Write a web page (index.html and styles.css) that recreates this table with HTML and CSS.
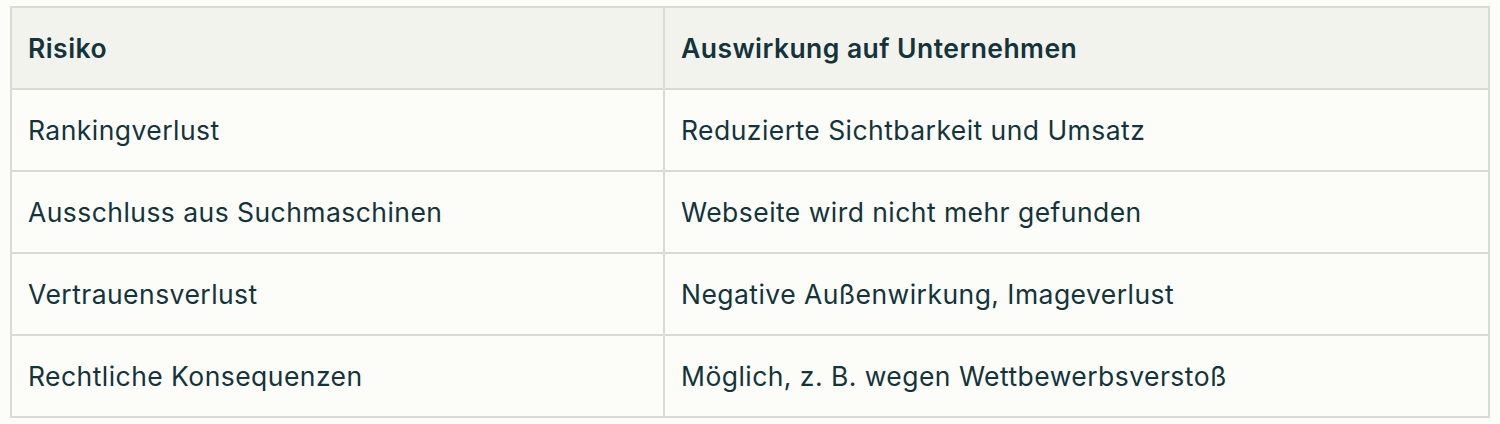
FILE: index.html
```html
<!DOCTYPE html>
<html>
    <head>
        <meta charset="utf-8" />
        <title>Risiken</title>
        <link rel="stylesheet" href="styles.css">
    </head>
    <body>
        <div class="wrap">
            <table class="risks">
                <thead>
                    <tr>
                        <th>Risiko</th>
                        <th>Auswirkung auf Unternehmen</th>
                    </tr>
                </thead>
                <tbody>
                    <tr>
                        <td>Rankingverlust</td>
                        <td>Reduzierte Sichtbarkeit und Umsatz</td>
                    </tr>
                    <tr>
                        <td>Ausschluss aus Suchmaschinen</td>
                        <td>Webseite wird nicht mehr gefunden</td>
                    </tr>
                    <tr>
                        <td>Vertrauensverlust</td>
                        <td>Negative Außenwirkung, Imageverlust</td>
                    </tr>
                    <tr>
                        <td>Rechtliche Konsequenzen</td>
                        <td>Möglich, z. B. wegen Wettbewerbsverstoß</td>
                    </tr>
                </tbody>
            </table>
        </div>
    </body>
</html>
```

FILE: styles.css
```css
body {
    margin: 0;
    background: #fcfcf9;
    font-family: Inter, "Liberation Sans", Arial, sans-serif;
    color: #13343b;
}

.wrap {
    padding: 6px 10px;
}

.risks {
    width: 1480px;
    box-sizing: border-box;
    table-layout: fixed;
    border-collapse: separate;
    border-spacing: 0;
    border: 2px solid #dadad4;
    font-size: 26.5px;
    letter-spacing: 0.45px;
}

.risks th,
.risks td {
    height: 80px;
    padding: 0 16px;
    box-sizing: border-box;
    text-align: left;
    vertical-align: middle;
    border-top: 2px solid #dadad4;
    border-right: 2px solid #dadad4;
}

.risks th:first-child {
    width: 653px;
}

.risks th:last-child,
.risks td:last-child {
    border-right: 0;
}

.risks thead th {
    border-top: 0;
    background: #f3f3ee;
    font-weight: 600;
}

.risks td {
    height: 82px;
    font-weight: 400;
}
```
